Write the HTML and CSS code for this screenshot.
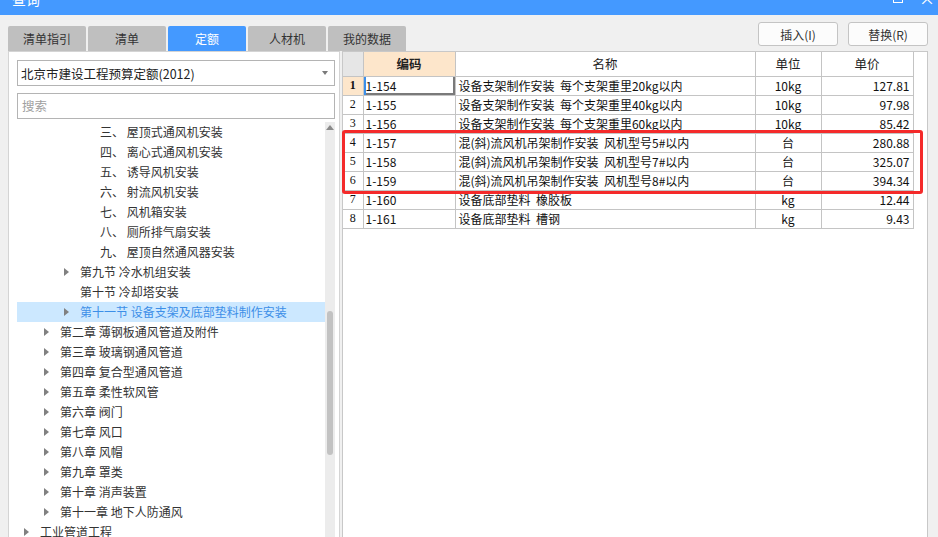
FILE: index.html
```html
<!DOCTYPE html>
<html lang="zh">
<head>
<meta charset="utf-8">
<title>查询</title>
<link rel="stylesheet" href="styles.css">
</head>
<body>
<div class="window">
  <div class="titlebar">
    <span class="title">查询</span>
    <span class="ctl-max"></span>
    <span class="ctl-close">×</span>
  </div>
  <div class="top">
    <div class="tabs">
      <div class="tab">清单指引</div>
      <div class="tab">清单</div>
      <div class="tab active">定额</div>
      <div class="tab">人材机</div>
      <div class="tab">我的数据</div>
    </div>
    <div class="buttons">
      <button class="btn">插入(I)</button>
      <button class="btn">替换(R)</button>
    </div>
  </div>
  <div class="body">
    <div class="left">
      <div class="select"><span>北京市建设工程预算定额(2012)</span><span class="caret"></span></div>
      <div class="search">搜索</div>
      <div class="tree">
        <ul class="list">
          <li class="lv3"><span class="tg"></span>三、 屋顶式通风机安装</li>
          <li class="lv3"><span class="tg"></span>四、 离心式通风机安装</li>
          <li class="lv3"><span class="tg"></span>五、 诱导风机安装</li>
          <li class="lv3"><span class="tg"></span>六、 射流风机安装</li>
          <li class="lv3"><span class="tg"></span>七、 风机箱安装</li>
          <li class="lv3"><span class="tg"></span>八、 厕所排气扇安装</li>
          <li class="lv3"><span class="tg"></span>九、 屋顶自然通风器安装</li>
          <li class="lv2"><span class="tg arrow"></span>第九节 冷水机组安装</li>
          <li class="lv2"><span class="tg"></span>第十节 冷却塔安装</li>
          <li class="lv2 sel"><span class="tg arrow"></span>第十一节 设备支架及底部垫料制作安装</li>
          <li class="lv1"><span class="tg arrow"></span>第二章 薄钢板通风管道及附件</li>
          <li class="lv1"><span class="tg arrow"></span>第三章 玻璃钢通风管道</li>
          <li class="lv1"><span class="tg arrow"></span>第四章 复合型通风管道</li>
          <li class="lv1"><span class="tg arrow"></span>第五章 柔性软风管</li>
          <li class="lv1"><span class="tg arrow"></span>第六章 阀门</li>
          <li class="lv1"><span class="tg arrow"></span>第七章 风口</li>
          <li class="lv1"><span class="tg arrow"></span>第八章 风帽</li>
          <li class="lv1"><span class="tg arrow"></span>第九章 罩类</li>
          <li class="lv1"><span class="tg arrow"></span>第十章 消声装置</li>
          <li class="lv1"><span class="tg arrow"></span>第十一章 地下人防通风</li>
          <li class="lv0"><span class="tg arrow"></span>工业管道工程</li>
        </ul>
        <div class="vscroll">
          <span class="up"></span>
          <span class="thumb"></span>
        </div>
      </div>
    </div>
    <div class="right">
      <table class="grid">
        <colgroup>
          <col class="c-no"><col class="c-code"><col class="c-name"><col class="c-unit"><col class="c-price">
        </colgroup>
        <thead>
          <tr><th class="no-h"></th><th class="code-h">编码</th><th>名称</th><th>单位</th><th>单价</th></tr>
        </thead>
        <tbody>
          <tr><td class="no cur">1</td><td class="code selcell">1-154</td><td class="name">设备支架制作安装  每个支架重里20kg以内</td><td class="unit">10kg</td><td class="price">127.81</td></tr>
          <tr><td class="no">2</td><td class="code">1-155</td><td class="name">设备支架制作安装  每个支架重里40kg以内</td><td class="unit">10kg</td><td class="price">97.98</td></tr>
          <tr><td class="no">3</td><td class="code">1-156</td><td class="name">设备支架制作安装  每个支架重里60kg以内</td><td class="unit">10kg</td><td class="price">85.42</td></tr>
          <tr><td class="no">4</td><td class="code">1-157</td><td class="name">混(斜)流风机吊架制作安装  风机型号5#以内</td><td class="unit">台</td><td class="price">280.88</td></tr>
          <tr><td class="no">5</td><td class="code">1-158</td><td class="name">混(斜)流风机吊架制作安装  风机型号7#以内</td><td class="unit">台</td><td class="price">325.07</td></tr>
          <tr><td class="no">6</td><td class="code">1-159</td><td class="name">混(斜)流风机吊架制作安装  风机型号8#以内</td><td class="unit">台</td><td class="price">394.34</td></tr>
          <tr><td class="no">7</td><td class="code">1-160</td><td class="name">设备底部垫料  橡胶板</td><td class="unit">kg</td><td class="price">12.44</td></tr>
          <tr><td class="no">8</td><td class="code">1-161</td><td class="name">设备底部垫料  槽钢</td><td class="unit">kg</td><td class="price">9.43</td></tr>
        </tbody>
      </table>
      <div class="mark"></div>
    </div>
  </div>
</div>
</body>
</html>
```
FILE: styles.css
```css
* { box-sizing: border-box; }
html, body { margin: 0; padding: 0; }
body {
  background: #f0f0f0;
  font-family: "Noto Sans CJK SC", "Noto Sans", sans-serif;
  font-size: 12px;
  color: #333;
  overflow: hidden;
}
.window {
  width: 938px;
  height: 537px;
  display: flex;
  flex-direction: column;
  overflow: hidden;
}
.titlebar {
  height: 15px;
  flex: none;
  background: #4499ff;
  position: relative;
  overflow: hidden;
}
.title {
  position: absolute;
  left: 12px;
  top: -11px;
  font-size: 14px;
  line-height: 20px;
  color: #fff;
}
.ctl-max {
  position: absolute;
  left: 893px;
  top: -8px;
  width: 10px;
  height: 11px;
  border: 1.5px solid #fff;
}
.ctl-close {
  position: absolute;
  left: 919px;
  top: -10px;
  font-size: 16px;
  line-height: 16px;
  color: #fff;
}
.top {
  height: 36px;
  flex: none;
  display: flex;
  justify-content: space-between;
  padding: 0 10px 0 8px;
}
.tabs {
  display: flex;
  gap: 2px;
  align-self: flex-end;
}
.tab {
  width: 78px;
  height: 25px;
  background: #bfbfbf;
  border-radius: 2px 2px 0 0;
  text-align: center;
  line-height: 25px;
  font-size: 12px;
  color: #333;
}
.tab.active {
  background: #4499ff;
  color: #fff;
}
.buttons {
  display: flex;
  gap: 10px;
  padding-top: 7px;
}
.btn {
  width: 80px;
  height: 24px;
  background: #fcfcfc;
  border: 1px solid #c4c4c4;
  border-radius: 3px;
  font-family: "Noto Sans CJK SC", "Noto Sans", sans-serif;
  font-size: 12px;
  color: #333;
  padding: 0;
}
.body {
  flex: 1;
  display: flex;
  gap: 2px;
  padding: 0 10px 0 8px;
  min-height: 0;
}
.left {
  width: 332px;
  flex: none;
  background: #fff;
  border: 1px solid #d4d4d4;
  border-bottom: none;
  padding: 8px 4px 0 8px;
  display: flex;
  flex-direction: column;
  overflow: hidden;
}
.select {
  height: 26px;
  border: 1px solid #b4b4b4;
  display: flex;
  align-items: center;
  justify-content: space-between;
  padding: 0 6px 0 3px;
  font-size: 12.5px;
  color: #222;
  flex: none;
}
.caret {
  width: 0;
  height: 0;
  border-left: 3.5px solid transparent;
  border-right: 3.5px solid transparent;
  border-top: 4px solid #7a7a7a;
}
.search {
  height: 26px;
  margin-top: 7px;
  border: 1px solid #b4b4b4;
  padding: 0 4px;
  line-height: 24px;
  color: #a0a0a0;
  font-size: 12.5px;
  flex: none;
}
.tree {
  margin-top: 3px;
  flex: 1;
  display: flex;
  min-height: 0;
}
.list {
  list-style: none;
  margin: 0;
  padding: 0;
  flex: 1;
  overflow: hidden;
}
.list li {
  height: 20px;
  line-height: 20px;
  white-space: nowrap;
  display: flex;
  align-items: center;
  color: #333;
}
.lv0 { padding-left: 7px; }
.lv1 { padding-left: 27px; }
.lv2 { padding-left: 47px; }
.lv3 { padding-left: 67px; }
.tg {
  width: 16px;
  flex: none;
  height: 20px;
  display: flex;
  align-items: center;
}
.tg.arrow::before {
  content: "";
  width: 0;
  height: 0;
  border-top: 4px solid transparent;
  border-bottom: 4px solid transparent;
  border-left: 5px solid #808080;
}
.list li.sel {
  background: #cce8ff;
  color: #3c8fe8;
}
.vscroll {
  width: 10px;
  flex: none;
  background: #ececec;
  position: relative;
}
.up {
  position: absolute;
  left: 1px;
  top: 3px;
  width: 0;
  height: 0;
  border-left: 4px solid transparent;
  border-right: 4px solid transparent;
  border-bottom: 5px solid #8a8a8a;
}
.thumb {
  position: absolute;
  left: 2px;
  top: 189px;
  width: 6px;
  height: 144px;
  background: #c2c2c2;
  border-radius: 3px;
}
.right {
  flex: 1;
  background: #fff;
  border: 1px solid #c8c8c8;
  border-bottom: none;
  position: relative;
}
.grid {
  border-collapse: collapse;
  table-layout: fixed;
  width: 570px;
  font-family: "Noto Sans CJK SC", "Noto Sans", sans-serif;
  font-size: 12px;
  color: #111;
}
.c-no { width: 20px; }
.c-code { width: 92px; }
.c-name { width: 300px; }
.c-unit { width: 66px; }
.c-price { width: 92px; }
.grid th, .grid td {
  border: 1px solid #c4c4c4;
  padding: 0 3px;
  white-space: nowrap;
  overflow: hidden;
}
.grid thead th { border-top: none; }
.grid th:first-child, .grid td:first-child { border-left: none; }
.grid th {
  height: 24px;
  font-weight: normal;
  text-align: center;
  font-size: 12.5px;
  color: #222;
}
.grid th.no-h { background: #e6e6e6; }
.grid th.code-h {
  background: #fde6cb;
  font-weight: bold;
}
.grid td {
  height: 19px;
  line-height: 17px;
}
.grid td.name { white-space: pre; }
.grid td.no {
  text-align: center;
  padding: 0;
  font-family: "Liberation Serif", "Noto Sans CJK SC", serif;
  font-size: 12px;
}
.grid td.no.cur {
  background: #fde6cb;
  font-weight: bold;
}
.grid td.code { padding-left: 2px; }
.grid td.selcell {
  box-shadow: inset 2px 0 0 #3b8fea, inset -2px -2px 0 #7a7a7a;
}
.grid td.unit { text-align: center; }
.grid td.price { text-align: right; padding-right: 3px; }
.mark {
  position: absolute;
  left: -1px;
  top: 78px;
  width: 581px;
  height: 64px;
  border: 3px solid #f42a2a;
  border-radius: 3px;
  pointer-events: none;
}
```
